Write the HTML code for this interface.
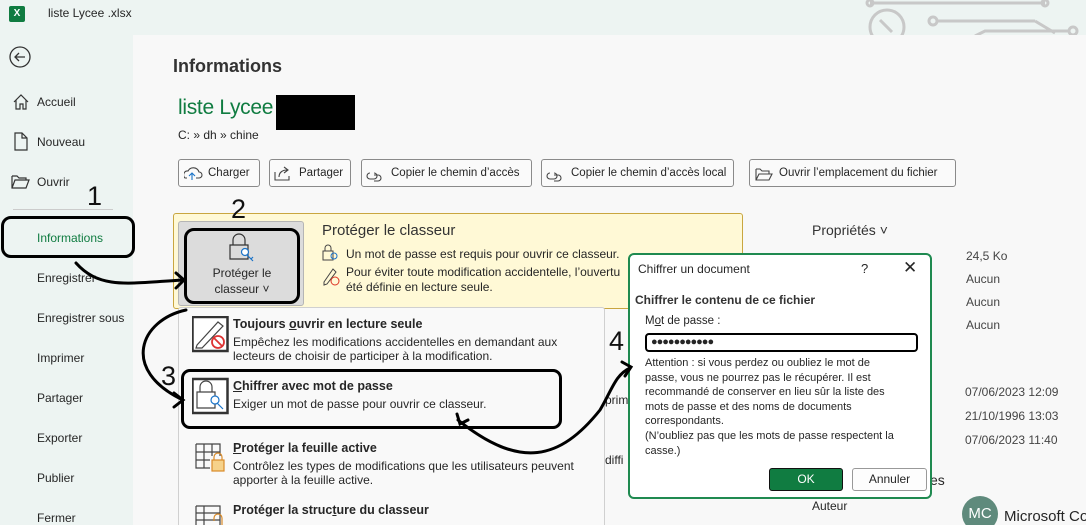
<!DOCTYPE html>
<html><head><meta charset="utf-8"><style>
*{margin:0;padding:0;box-sizing:border-box}
html,body{width:1086px;height:525px;overflow:hidden}
body{background:#edf4f2;font-family:"Liberation Sans",sans-serif;color:#262626;position:relative;font-size:12px}
.a{position:absolute;white-space:nowrap}
.side{font-size:12px;left:37px}
.btn{position:absolute;top:159px;height:28px;border:1px solid #8a8a8a;border-radius:3px;background:#fafafa;font-size:11.5px;line-height:26px;padding-left:29px;white-space:nowrap;overflow:hidden}
.t{font-weight:bold;font-size:12.5px}
.d{font-size:12px;line-height:14px}
.pv{font-size:12px;color:#444;left:966px}
</style></head><body>
<div class="a" style="left:9px;top:6px;width:16px;height:16px;background:#107c41;border-radius:2px;color:#fff;font-size:10px;font-weight:bold;text-align:center;line-height:16px">X</div>
<div class="a" style="left:48px;top:6px;font-size:12px">liste Lycee .xlsx</div>
<svg class="a" style="left:860px;top:0" width="226" height="36"><g stroke="#c8c8c8" stroke-width="3" fill="none"><line x1="10" y1="3" x2="185" y2="3"/><circle cx="10" cy="3" r="3"/><circle cx="185" cy="3" r="3"/><circle cx="27" cy="27" r="17"/><line x1="20" y1="20" x2="32" y2="32"/><circle cx="73" cy="21" r="4"/><line x1="77" y1="21" x2="175" y2="21"/><path d="M175 21 L195 33"/><path d="M115 36 L125 31 H210"/><circle cx="213" cy="31" r="4"/></g></svg>
<svg class="a" style="left:9px;top:46px" width="24" height="24"><circle cx="11" cy="11" r="10" fill="none" stroke="#333" stroke-width="1.3"/><path d="M16 11H6M10 7L6 11L10 15" fill="none" stroke="#333" stroke-width="1.3"/></svg>
<svg class="a" style="left:12px;top:93px" width="18" height="18"><path d="M2 9L9 2L16 9M4 7V16H8V11H11V16H14V7" fill="none" stroke="#333" stroke-width="1.2"/></svg>
<div class="a side" style="top:95px">Accueil</div>
<svg class="a" style="left:13px;top:132px" width="16" height="20"><path d="M2 1H9L14 6V18H2Z M9 1V6H14" fill="none" stroke="#333" stroke-width="1.2"/></svg>
<div class="a side" style="top:135px">Nouveau</div>
<svg class="a" style="left:11px;top:174px" width="20" height="16"><path d="M1 2H6L8 4H15V6 M1 2V14H15L18 6H4L1 14" fill="none" stroke="#333" stroke-width="1.2"/></svg>
<div class="a side" style="top:175px">Ouvrir</div>
<div class="a" style="left:13px;top:209px;width:100px;height:1px;background:#ccc"></div>
<div class="a side" style="top:231px;color:#107c41">Informations</div>
<div class="a side" style="top:271px">Enregistrer</div>
<div class="a side" style="top:311px">Enregistrer sous</div>
<div class="a side" style="top:351px">Imprimer</div>
<div class="a side" style="top:391px">Partager</div>
<div class="a side" style="top:431px">Exporter</div>
<div class="a side" style="top:471px">Publier</div>
<div class="a side" style="top:511px">Fermer</div>

<div class="a" style="left:133px;top:35px;width:953px;height:490px;background:#f8f8f8"></div>
<div class="a" style="left:173px;top:56px;font-size:18px;font-weight:bold;color:#333">Informations</div>
<div class="a" style="left:178px;top:96px;font-size:21px;color:#107c41;letter-spacing:-0.3px">liste Lycee</div>
<div class="a" style="left:276px;top:95px;width:79px;height:35px;background:#000"></div>
<div class="a" style="left:178px;top:128px;font-size:12px">C: » dh » chine</div>

<div class="btn" style="left:178px;width:82px">Charger</div>
<div class="btn" style="left:269px;width:82px">Partager</div>
<div class="btn" style="left:361px;width:171px">Copier le chemin d’accès</div>
<div class="btn" style="left:541px;width:193px">Copier le chemin d’accès local</div>
<div class="btn" style="left:749px;width:207px">Ouvrir l’emplacement du fichier</div>
<svg class="a" style="left:184px;top:166px" width="760" height="16" fill="none" stroke="#444" stroke-width="1.1"><path d="M3 12H1A4 4 0 0 1 4 5A6 6 0 0 1 15 6A3 3 0 0 1 15 12H12"/><path d="M8 14V7M5 10L8 7L11 10" stroke="#1a73c8"/><path d="M91 6V14H105V10M95 11C95 6 99 4 103 4M100 1L104 4L100 7"/><path d="M186 7A3 3 0 0 0 186 13H190A3 3 0 0 0 190 7M190 9H194A3 3 0 0 1 194 15H190"/><path d="M366 7A3 3 0 0 0 366 13H370A3 3 0 0 0 370 7M370 9H374A3 3 0 0 1 374 15H370"/><path d="M572 3H576L578 5H585V8M572 3V14H585L588 8H575L572 14"/></svg>

<div class="a" style="left:173px;top:213px;width:570px;height:96px;background:#fff9d6;border:1px solid #c9a640;border-radius:3px"></div>
<div class="a" style="left:178px;top:221px;width:126px;height:85px;background:#dcdcdc;border:1px solid #b5b5b5;border-radius:3px"></div>
<div class="a" style="left:184px;top:228px;width:116px;height:76px;border:3px solid #000;border-radius:10px"></div>
<svg class="a" style="left:228px;top:233px" width="30" height="30" fill="none" stroke="#333" stroke-width="1.2"><path d="M5 12V7A6 6 0 0 1 17 7V12M2 12H20V26H2Z"/><circle cx="17" cy="19" r="3.5" stroke="#1a73c8" fill="#fff"/><path d="M19 22L25 28M23 26L25 24" stroke="#1a73c8"/></svg>
<div class="a" style="left:184px;top:265px;width:116px;text-align:center;font-size:12px;line-height:16px;white-space:normal">Protéger le<br>classeur ˅</div>
<div class="a" style="left:322px;top:222px;font-size:15px;color:#333">Protéger le classeur</div>
<div class="a" style="left:346px;top:247px;font-size:12px">Un mot de passe est requis pour ouvrir ce classeur.</div>
<div class="a" style="left:346px;top:265px;font-size:12px;line-height:15px">Pour éviter toute modification accidentelle, l’ouvertu<br>été définie en lecture seule.</div>
<svg class="a" style="left:321px;top:243px" width="22" height="46" fill="none" stroke="#444"><path d="M4 8V5A3 3 0 0 1 10 5V8M2 8H12V17H2Z"/><circle cx="13" cy="13" r="3" stroke="#1a73c8"/><path d="M3 39L12 26L15 29L6 41L3 42Z"/><circle cx="14" cy="38" r="4" stroke="#d32"/></svg>

<div class="a" style="left:812px;top:222px;font-size:14px;color:#333">Propriétés ˅</div>
<div class="a pv" style="top:249px">24,5 Ko</div>
<div class="a pv" style="top:272px">Aucun</div>
<div class="a pv" style="top:295px">Aucun</div>
<div class="a pv" style="top:318px">Aucun</div>
<div class="a pv" style="top:385px;left:965px">07/06/2023 12:09</div>
<div class="a pv" style="top:409px;left:965px">21/10/1996 13:03</div>
<div class="a pv" style="top:433px;left:965px">07/06/2023 11:40</div>
<div class="a" style="left:812px;top:499px;font-size:12px">Auteur</div>
<div class="a" style="left:962px;top:496px;width:36px;height:36px;border-radius:50%;background:#5f8a7c;color:#fff;font-size:15px;line-height:36px;text-align:center">MC</div>
<div class="a" style="left:1004px;top:508px;font-size:15px">Microsoft Co</div>
<div class="a" style="left:605px;top:393px;font-size:12px">prim</div>
<div class="a" style="left:605px;top:453px;font-size:12px">diffi</div>
<div class="a" style="left:930px;top:472px;font-size:14px">es</div>

<div class="a" style="left:178px;top:307px;width:427px;height:230px;background:#f9f9f9;border:1px solid #d0d0d0;border-radius:3px"></div>
<svg class="a" style="left:192px;top:316px" width="40" height="209" fill="none" stroke="#444" stroke-width="1.2"><rect x="0.5" y="1" width="35" height="34" stroke="#333" stroke-width="2.5" fill="#fff"/><path d="M5 29L26 6L31 10L10 32L4 32Z"/><circle cx="26" cy="26" r="6" stroke="#d33" stroke-width="1.8"/><path d="M22 22L30 30" stroke="#d33" stroke-width="1.8"/><rect x="0.5" y="63" width="35" height="34" stroke="#333" stroke-width="2.5" fill="#fff"/><path d="M8 76V71A6 6 0 0 1 20 71V76M5 76H23V92H5Z"/><circle cx="23" cy="84" r="4" stroke="#1a73c8" fill="#fff"/><path d="M25 87L31 93" stroke="#1a73c8"/><path d="M4 128H28V140M4 128V152H18M4 136H28M4 144H18M12 128V152M20 128V140"/><path d="M22 144V141A3 3 0 0 1 30 141V144" stroke="#d98b2a"/><rect x="20" y="144" width="12" height="11" fill="#f6d28a" stroke="#d98b2a"/><path d="M4 190H28V209M4 190V209M12 190V209M4 197H28M4 204H28"/><path d="M22 205V202A3 3 0 0 1 30 202V209" stroke="#d98b2a"/></svg>
<div class="a t" style="left:233px;top:317px">Toujours <u>o</u>uvrir en lecture seule</div>
<div class="a d" style="left:233px;top:335px">Empêchez les modifications accidentelles en demandant aux<br>lecteurs de choisir de participer à la modification.</div>
<div class="a t" style="left:233px;top:379px"><u>C</u>hiffrer avec mot de passe</div>
<div class="a d" style="left:233px;top:397px">Exiger un mot de passe pour ouvrir ce classeur.</div>
<div class="a" style="left:181px;top:369px;width:381px;height:60px;border:3px solid #000;border-radius:9px"></div>
<div class="a t" style="left:233px;top:441px"><u>P</u>rotéger la feuille active</div>
<div class="a d" style="left:233px;top:459px">Contrôlez les types de modifications que les utilisateurs peuvent<br>apporter à la feuille active.</div>
<div class="a t" style="left:233px;top:503px">Protéger la struc<u>t</u>ure du classeur</div>

<div class="a" style="left:1px;top:216px;width:134px;height:42px;border:3px solid #000;border-radius:10px"></div>
<div class="a" style="left:87px;top:181px;font-size:27px;color:#111">1</div>
<div class="a" style="left:231px;top:194px;font-size:27px;color:#111">2</div>
<div class="a" style="left:161px;top:361px;font-size:27px;color:#111">3</div>
<div class="a" style="left:609px;top:326px;font-size:27px;color:#111">4</div>

<div class="a" style="left:628px;top:253px;width:304px;height:246px;background:#fff;border:2px solid #1f8a50;border-radius:6px"></div>
<div class="a" style="left:638px;top:262px;font-size:12px">Chiffrer un document</div>
<div class="a" style="left:861px;top:261px;font-size:13px">?</div>
<div class="a" style="left:903px;top:258px;font-size:17px">✕</div>
<div class="a" style="left:635px;top:293px;font-size:12px;font-weight:bold;color:#333">Chiffrer le contenu de ce fichier</div>
<div class="a" style="left:645px;top:315px;font-size:11.5px">M<u>o</u>t de passe :</div>
<div class="a" style="left:645px;top:333px;width:273px;height:19px;border:2.5px solid #000;border-radius:4px;font-size:11px;line-height:14px;padding-left:4px;letter-spacing:-1px">●●●●●●●●●●●</div>
<div class="a" style="left:645px;top:356px;font-size:11px;line-height:14.6px">Attention : si vous perdez ou oubliez le mot de<br>passe, vous ne pourrez pas le récupérer. Il est<br>recommandé de conserver en lieu sûr la liste des<br>mots de passe et des noms de documents<br>correspondants.<br>(N’oubliez pas que les mots de passe respectent la<br>casse.)</div>
<div class="a" style="left:769px;top:468px;width:74px;height:23px;background:#107c41;border:1.5px solid #111;border-radius:3px;color:#fff;text-align:center;line-height:20px;font-size:12px">OK</div>
<div class="a" style="left:852px;top:468px;width:75px;height:23px;background:#fdfdfd;border:1px solid #999;border-radius:3px;text-align:center;line-height:21px;font-size:12px">Annuler</div>

<svg class="a" style="left:0;top:0" width="1086" height="525" fill="none" stroke="#000" stroke-width="3" stroke-linecap="round"><path d="M76 263C100 290 130 283 183 280"/><path d="M176 273L184 280L176 288"/><path d="M186 310C140 320 120 370 183 400"/><path d="M174 393L183 400L174 407"/><path d="M458 420C520 470 560 460 600 410C612 390 615 375 630 368"/><path d="M457 414L460 424L468 420"/><path d="M622 362L631 367L625 376"/></svg>
</body></html>
